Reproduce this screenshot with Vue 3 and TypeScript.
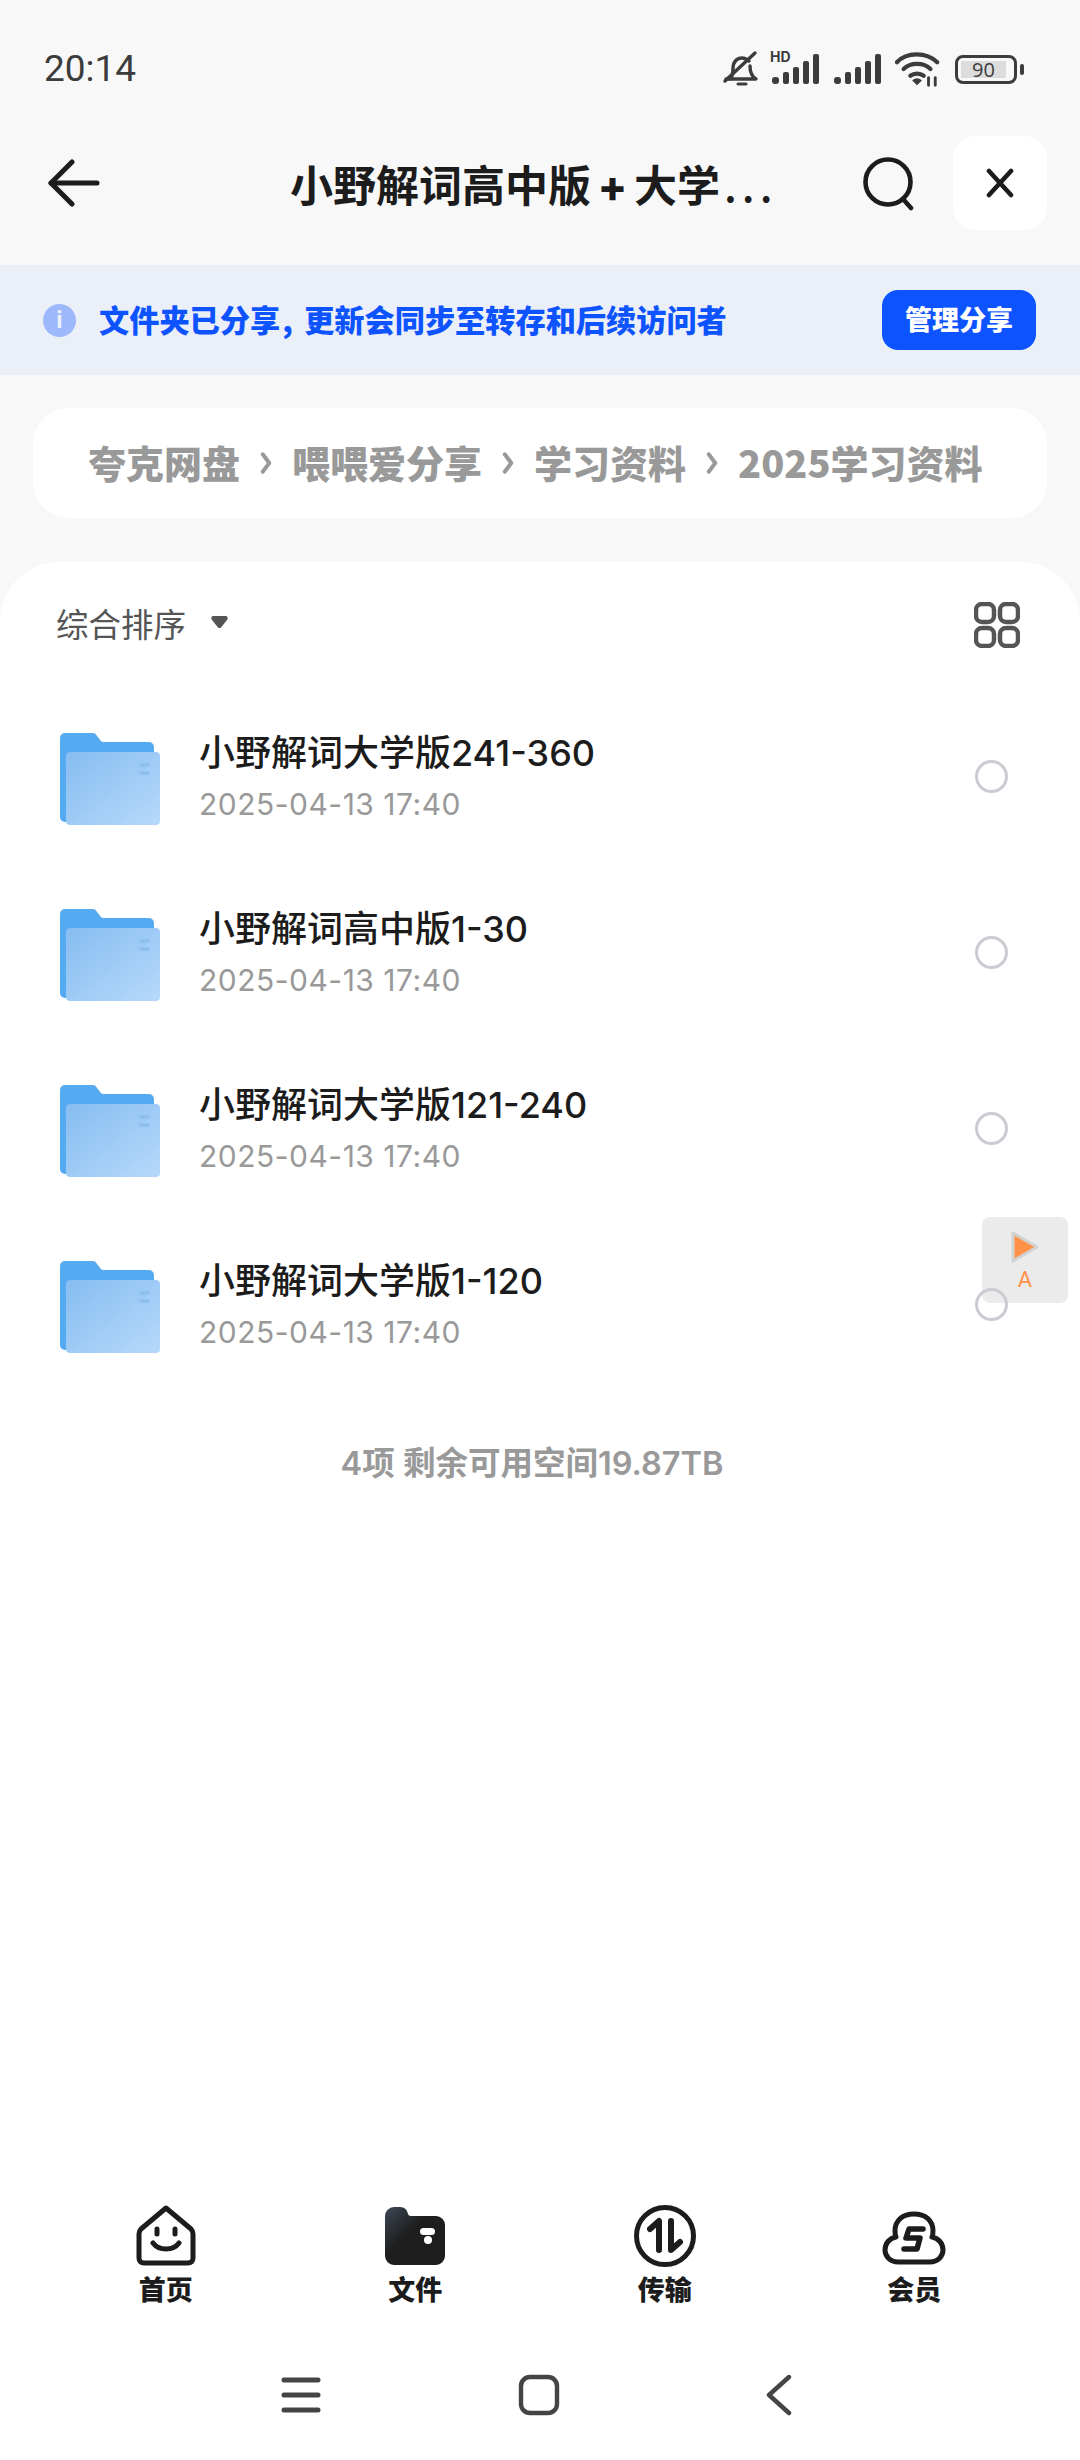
<script setup lang="ts">
interface FolderItem {
  name: string;
  date: string;
}

const crumbs = ['夸克网盘', '喂喂爱分享', '学习资料', '2025学习资料'];

const folders: FolderItem[] = [
  { name: '小野解词大学版241-360', date: '2025-04-13 17:40' },
  { name: '小野解词高中版1-30', date: '2025-04-13 17:40' },
  { name: '小野解词大学版121-240', date: '2025-04-13 17:40' },
  { name: '小野解词大学版1-120', date: '2025-04-13 17:40' }
];
</script>

<template>
  <div class="page">
    <div class="status">
      <span class="time">20:14</span>
      <div class="status-icons">
        <svg class="bell" width="38" height="38" viewBox="0 0 38 38" fill="none" stroke="#3c3c3c" stroke-width="3.4" stroke-linecap="round" stroke-linejoin="round">
          <path d="M8 29c3-3 3-6 3-11 0-6 4-10 9-10 3 0 5 1 7 3" />
          <path d="M28 16c0 6 1 10 6 13H4" />
          <path d="M3 31 33 3" />
          <path d="M16 34h8" stroke-width="3" />
        </svg>
        <div class="signal">
          <span class="hd-label">HD</span>
          <svg width="48" height="30" viewBox="0 0 48 30" fill="#3c3c3c">
            <rect x="1" y="23" width="7" height="7" rx="3" />
            <rect x="12" y="18" width="6" height="12" rx="2" />
            <rect x="22" y="13" width="6" height="17" rx="2" />
            <rect x="32" y="7" width="6" height="23" rx="2" />
            <rect x="42" y="0" width="6" height="30" rx="2" />
          </svg>
        </div>
        <svg width="48" height="30" viewBox="0 0 48 30" fill="#3c3c3c">
          <rect x="1" y="23" width="7" height="7" rx="3" />
          <rect x="12" y="18" width="6" height="12" rx="2" />
          <rect x="22" y="13" width="6" height="17" rx="2" />
          <rect x="32" y="7" width="6" height="23" rx="2" />
          <rect x="42" y="0" width="6" height="30" rx="2" />
        </svg>
        <svg width="46" height="36" viewBox="0 0 48 36" fill="none" stroke="#3c3c3c" stroke-width="4.4" stroke-linecap="round">
          <path d="M2 11C12 0 33 0 44 11" />
          <path d="M9 18c7-7 21-7 28 0" />
          <path d="M16 25c4-3 10-3 14 0" />
          <path d="M23 34l-4-4c2-2 6-2 8 0z" fill="#3c3c3c" stroke-width="1.5" />
          <path d="M35 35v-8M42 35v-8" stroke-width="3" />
        </svg>
        <div class="battery">
          <div class="battery-shell"><span class="battery-fill">90</span></div>
          <span class="battery-cap"></span>
        </div>
      </div>
    </div>

    <div class="nav">
      <svg class="back" width="52" height="48" viewBox="0 0 52 48" fill="none" stroke="#1c1c1c" stroke-width="5" stroke-linecap="round" stroke-linejoin="round">
        <path d="M24 3 3 24l21 21" />
        <path d="M3 24h46" />
      </svg>
      <span class="title">小野解词高中版<span class="plus">+</span>大学<span class="dots">...</span></span>
      <svg class="search" width="54" height="54" viewBox="0 0 54 54" fill="none" stroke="#1c1c1c" stroke-width="4.6" stroke-linecap="round">
        <circle cx="26" cy="25" r="22.500" />
        <path d="M41 42l8 9" />
      </svg>
      <div class="close">
        <svg width="30" height="30" viewBox="0 0 30 30" fill="none" stroke="#1c1c1c" stroke-width="4.6" stroke-linecap="round">
          <path d="M4 3l22 24M26 3 4 27" />
        </svg>
      </div>
    </div>

    <div class="banner">
      <div class="banner-info">
        <span class="info-dot">i</span>
        <span class="banner-text">文件夹已分享<span class="comma">,</span>更新会同步至转存和后续访问者</span>
      </div>
      <span class="manage">管理分享</span>
    </div>

    <div class="crumbs">
      <template v-for="(c, i) in crumbs" :key="c">
        <span class="crumb">{{ c }}</span>
        <svg v-if="i < crumbs.length - 1" width="12" height="24" viewBox="0 0 10 22" fill="none" stroke="#999" stroke-width="3.6" stroke-linecap="round" stroke-linejoin="round">
          <path d="M2 3l6 8-6 8" />
        </svg>
      </template>
    </div>

    <div class="sheet">
      <div class="sort-row">
        <div class="sort">
          <span>综合排序</span>
          <svg width="19" height="14" viewBox="0 0 20 16" fill="#555">
            <path d="M3 1h14c2 0 3 2 2 4l-7 9c-1 1.300-3 1.300-4 0L1 5C0 3 1 1 3 1z" />
          </svg>
        </div>
        <svg width="46" height="46" viewBox="0 0 46 46" fill="none" stroke="#555" stroke-width="4.500">
          <rect x="2" y="2" width="18" height="18" rx="6" />
          <rect x="26" y="2" width="18" height="18" rx="6" />
          <rect x="2" y="26" width="18" height="18" rx="6" />
          <rect x="26" y="26" width="18" height="18" rx="6" />
        </svg>
      </div>

      <ul class="list">
        <li v-for="f in folders" :key="f.name" class="row">
          <svg class="folder" width="100" height="92" viewBox="0 0 100 92">
            <defs>
              <linearGradient id="front" x1="0" y1="0" x2="1" y2="1">
                <stop offset="0" stop-color="#86bdf0" />
                <stop offset="1" stop-color="#b6d9fb" />
              </linearGradient>
            </defs>
            <path d="M0 5a5 5 0 0 1 5-5h27c3 0 4 1 5 3l4 5c1 1 2 1 3 1h45a5 5 0 0 1 5 5v70a5 5 0 0 1-5 5H5a5 5 0 0 1-5-5z" fill="#55abf1" />
            <rect x="6" y="19" width="94" height="73" rx="4" fill="url(#front)" />
            <rect x="79" y="30" width="11" height="4" rx="2" fill="#8cc0ef" />
            <rect x="79" y="38" width="11" height="4" rx="2" fill="#8cc0ef" />
          </svg>
          <div class="row-text">
            <span class="row-name">{{ f.name }}</span>
            <span class="row-date">{{ f.date }}</span>
          </div>
          <span class="radio"></span>
        </li>
      </ul>

      <p class="summary">4项 剩余可用空间19.87TB</p>

      <div class="float-btn">
        <svg width="30" height="34" viewBox="0 0 30 34">
          <path d="M3 3v28l24-14z" fill="#ff9248" stroke="#d2d2d2" stroke-width="3" stroke-linejoin="round" />
        </svg>
        <span>A</span>
      </div>

      <div class="tabs">
        <div class="tab">
          <svg width="62" height="62" viewBox="0 0 62 62" fill="none" stroke="#1c1c1c" stroke-width="5" stroke-linecap="round" stroke-linejoin="round">
            <path d="M31 3 56 24c1 1 2 3 2 5v24c0 3-2 5-5 5H9c-3 0-5-2-5-5V29c0-2 1-4 2-5z" />
            <path d="M22 24v5M40 24v5" />
            <path d="M18 38c6 8 20 8 26 0" />
          </svg>
          <span>首页</span>
        </div>
        <div class="tab">
          <svg width="62" height="62" viewBox="0 0 62 62">
            <defs>
              <linearGradient id="wallet" x1="0" y1="0" x2="0.7" y2="0.7">
                <stop offset="0" stop-color="#3e4856" />
                <stop offset="0.6" stop-color="#1e1e1e" />
              </linearGradient>
            </defs>
            <path d="M1 11a9 9 0 0 1 9-9h6c5 0 7 3 8 7 1 2 2 2 4 2h24a9 9 0 0 1 9 9v31a9 9 0 0 1-9 9H10a9 9 0 0 1-9-9z" fill="url(#wallet)" />
            <rect x="36" y="23" width="15" height="7" rx="3.500" fill="#fff" />
            <circle cx="44" cy="35" r="4" fill="#fff" />
          </svg>
          <span>文件</span>
        </div>
        <div class="tab">
          <svg width="62" height="62" viewBox="0 0 62 62" fill="none" stroke="#1c1c1c" stroke-width="5" stroke-linecap="round" stroke-linejoin="round">
            <circle cx="31" cy="31" r="28.500" />
            <path d="M16 24l9-8v29" stroke-width="6" />
            <path d="M37 16v29l9-8" stroke-width="6" />
          </svg>
          <span>传输</span>
        </div>
        <div class="tab">
          <svg width="66" height="62" viewBox="0 0 66 62" fill="none" stroke="#1c1c1c" stroke-width="5" stroke-linecap="round" stroke-linejoin="round">
            <path d="M17 57C9 57 4 51 4 45 4 38 9 33 15 32c-1-2-1-4-1-6C14 15 22 9 33 9s19 6 19 17c0 2 0 4-1 6 6 1 11 6 11 13 0 6-5 12-13 12z" />
            <path d="M42 24H28l-3 9h14l-3 11H23" stroke-width="5.500" />
          </svg>
          <span>会员</span>
        </div>
      </div>

      <div class="sysnav">
        <svg width="40" height="40" viewBox="0 0 40 40" fill="none" stroke="#444" stroke-width="5" stroke-linecap="round">
          <path d="M3 5h34M3 20h34M3 35h34" />
        </svg>
        <svg class="sys-home" width="42" height="42" viewBox="0 0 42 42" fill="none" stroke="#444" stroke-width="4.400">
          <rect x="3" y="3" width="36" height="36" rx="9" />
        </svg>
        <svg width="28" height="42" viewBox="0 0 28 42" fill="none" stroke="#444" stroke-width="4.400" stroke-linecap="round" stroke-linejoin="round">
          <path d="M24 3 4 21l20 18" />
        </svg>
      </div>
    </div>
  </div>
</template>

<style>
html,
body {
  margin: 0;
  background: #ffffff;
}
</style>

<style scoped>
.page {
  width: 1080px;
  height: 2460px;
  background: #f8f8f8;
  display: flex;
  flex-direction: column;
  font-family: "Noto Sans CJK SC", "Noto Sans", sans-serif;
  overflow: hidden;
}

.status {
  height: 136px;
  flex: none;
  display: flex;
  justify-content: space-between;
  align-items: flex-start;
  padding: 46px 56px 0 44px;
  box-sizing: border-box;
}
.time {
  font-family: Roboto, sans-serif;
  font-size: 37px;
  line-height: 46px;
  color: #3c3c3c;
}
.status-icons {
  display: flex;
  align-items: center;
  gap: 14px;
  margin-top: 4px;
}
.bell {
  margin-right: -3px;
}
.signal {
  position: relative;
  display: flex;
}
.hd-label {
  position: absolute;
  left: -1px;
  top: -4px;
  font-family: Inter, sans-serif;
  font-size: 14px;
  line-height: 14px;
  font-weight: 700;
  color: #3c3c3c;
}
.battery {
  display: flex;
  align-items: center;
  gap: 3px;
}
.battery-shell {
  width: 50px;
  height: 17px;
  border: 3px solid #3c3c3c;
  border-radius: 8px;
  padding: 3px;
  display: flex;
}
.battery-fill {
  width: 45px;
  background: #dcdcdc;
  font-family: "Open Sans", sans-serif;
  font-size: 20px;
  line-height: 18px;
  color: #3c3c3c;
  text-align: center;
}
.battery-cap {
  width: 4px;
  height: 11px;
  background: #3c3c3c;
  border-radius: 2px;
}

.nav {
  height: 129px;
  flex: none;
  display: flex;
  align-items: flex-start;
  padding: 0 33px 0 48px;
  box-sizing: border-box;
  position: relative;
}
.back {
  margin-top: 23px;
}
.title {
  position: absolute;
  left: 290px;
  top: 16px;
  font-size: 43px;
  line-height: 62px;
  font-weight: 700;
  color: #1c1c1c;
  white-space: nowrap;
}
.plus {
  display: inline-block;
  width: 43px;
  text-align: center;
  font-family: Inter, sans-serif;
  font-weight: 800;
}
.dots {
  font-weight: 500;
  letter-spacing: 5px;
  margin-left: 4px;
}
.search {
  margin: 21px 0 0 auto;
}
.close {
  width: 94px;
  height: 94px;
  margin-left: 37px;
  background: #fff;
  border-radius: 22px;
  display: flex;
  align-items: center;
  justify-content: center;
}

.banner {
  height: 110px;
  flex: none;
  background: #eaeff8;
  display: flex;
  align-items: center;
  justify-content: space-between;
  padding: 0 44px 0 43px;
}
.banner-info {
  display: flex;
  align-items: center;
  gap: 23px;
}
.info-dot {
  width: 33px;
  height: 33px;
  border-radius: 50%;
  background: #9db9fb;
  color: #e9effc;
  font-family: Roboto, sans-serif;
  font-size: 24px;
  font-weight: 700;
  line-height: 33px;
  text-align: center;
}
.banner-text {
  font-size: 30.2px;
  font-weight: 900;
  color: #0d53ff;
  white-space: nowrap;
  margin-top: -3px;
}
.comma {
  display: inline-block;
  width: 24px;
  text-indent: 2px;
}
.manage {
  width: 154px;
  height: 60px;
  background: #0d53ff;
  border-radius: 16px;
  color: #fff;
  font-size: 27px;
  font-weight: 900;
  line-height: 58px;
  text-align: center;
}

.crumbs {
  margin: 33px 33px 44px;
  height: 110px;
  flex: none;
  background: #fff;
  border-radius: 36px;
  display: flex;
  align-items: center;
  gap: 20px;
  padding-left: 55px;
  font-size: 38px;
  font-weight: 900;
  color: #999;
  white-space: nowrap;
}
.crumb {
  margin-top: -3px;
}

.sheet {
  flex: 1;
  position: relative;
  background: #fff;
  border-radius: 60px 60px 0 0;
  display: flex;
  flex-direction: column;
}
.sort-row {
  height: 126px;
  flex: none;
  display: flex;
  align-items: center;
  justify-content: space-between;
  padding: 0 60px 0 56px;
}
.sort {
  display: flex;
  align-items: center;
  gap: 24px;
  font-size: 32.5px;
  color: #555;
  margin-bottom: 6px;
}
.list {
  list-style: none;
  margin: 0;
  padding: 0;
}
.row {
  height: 176px;
  display: flex;
  align-items: center;
  padding: 0 30px 0 60px;
}
.folder {
  flex: none;
  margin-top: 6px;
}
.row-text {
  margin-left: 39px;
  display: flex;
  flex-direction: column;
  gap: 9px;
  flex: 1;
  padding-top: 3px;
}
.row-name {
  font-family: Inter, "Noto Sans CJK SC", sans-serif;
  font-size: 36px;
  line-height: 44px;
  font-weight: 500;
  color: #1c1c1c;
}
.row-date {
  font-family: Inter, "Noto Sans CJK SC", sans-serif;
  font-size: 30px;
  line-height: 40px;
  letter-spacing: 0.5px;
  color: #999;
}
.radio {
  position: relative;
  z-index: 1;
  width: 27px;
  height: 27px;
  border: 3px solid #c9ccd1;
  border-radius: 50%;
  margin-right: 42px;
}
.summary {
  margin: 50px 0 0;
  padding-right: 16px;
  font-family: Inter, "Noto Sans CJK SC", sans-serif;
  font-size: 32.5px;
  font-weight: 600;
  line-height: 44px;
  color: #999;
  text-align: center;
}
.float-btn {
  position: absolute;
  left: 982px;
  top: 655px;
  width: 86px;
  height: 86px;
  background: #ebebeb;
  border-radius: 8px;
  display: flex;
  flex-direction: column;
  align-items: center;
  padding-top: 13px;
  box-sizing: border-box;
  color: #ff9248;
  font-family: Roboto, sans-serif;
  font-size: 22px;
  line-height: 32px;
}
.tabs {
  margin-top: auto;
  display: grid;
  grid-template-columns: repeat(4, 1fr);
  padding: 0 41px;
}
.tab {
  display: flex;
  flex-direction: column;
  align-items: center;
  gap: 5px;
  font-size: 27px;
  line-height: 34px;
  font-weight: 900;
  color: #1c1c1c;
}
.sysnav {
  height: 154px;
  flex: none;
  display: flex;
  align-items: center;
  justify-content: center;
  padding: 24px 6px 0 0;
  box-sizing: border-box;
}
.sys-home {
  margin: 0 205px 0 197px;
}
</style>
